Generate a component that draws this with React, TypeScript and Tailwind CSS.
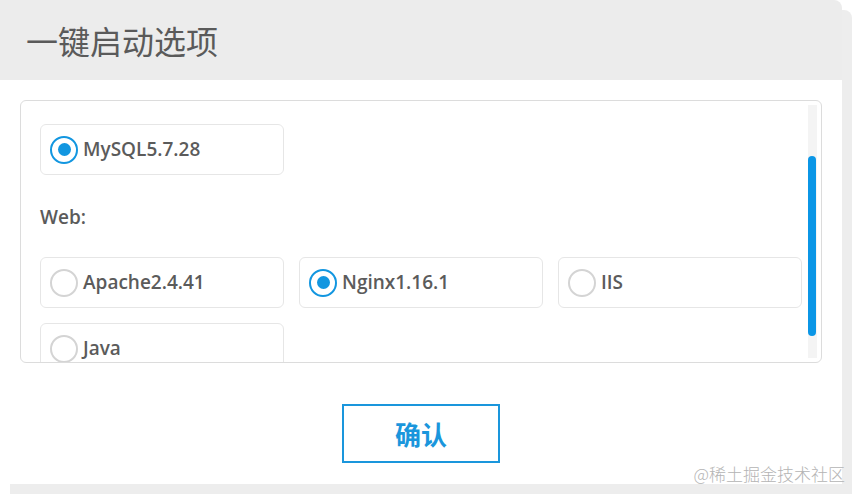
import React from "react";

type Option = { name: string; checked?: boolean };

const Radio: React.FC<{ checked?: boolean }> = ({ checked }) =>
  checked ? (
    <span className="flex h-[28px] w-[28px] shrink-0 items-center justify-center rounded-full border-[2.5px] border-[#1296e0] bg-white">
      <span className="h-[13px] w-[13px] rounded-full bg-[#1296e0]" />
    </span>
  ) : (
    <span className="h-[28px] w-[28px] shrink-0 rounded-full border-2 border-[#d4d4d4] bg-white" />
  );

const OptionCard: React.FC<{ opt: Option }> = ({ opt }) => (
  <div className="flex h-[51px] items-center gap-[5px] rounded-[6px] border border-[#e6e6e6] bg-white pl-[9px]">
    <Radio checked={opt.checked} />
    <span className="text-[19px] font-semibold text-[#5b5b5b]">{opt.name}</span>
  </div>
);

const App: React.FC = () => {
  const web: Option[] = [
    { name: "Apache2.4.41" },
    { name: "Nginx1.16.1", checked: true },
    { name: "IIS" },
    { name: "Java" },
  ];

  return (
    <div
      className="relative h-[494px] w-[852px] overflow-hidden bg-white"
      style={{ fontFamily: '"Open Sans", "Noto Sans CJK SC", sans-serif' }}
    >
      {/* Dialog */}
      <div className="flex h-[484px] w-[842px] flex-col rounded-tr-[8px] bg-white shadow-[10px_10px_0_0_#ededed]">
        {/* Header */}
        <div className="flex h-[80px] items-center rounded-tr-[8px] bg-[#ececec] pl-[26px]">
          <h2
            className="text-[32px] font-normal text-[#5a5a5a]"
            style={{ fontFamily: '"Noto Sans CJK SC", sans-serif' }}
          >
            一键启动选项
          </h2>
        </div>

        {/* Body */}
        <div className="flex flex-col px-[20px] pt-[20px]">
          <div className="relative h-[263px] overflow-hidden rounded-[6px] border border-[#dcdcdc]">
            <div className="pl-[19px] pr-[19px] pt-[23px]">
              <div className="grid grid-cols-3 gap-[15px]">
                <OptionCard opt={{ name: "MySQL5.7.28", checked: true }} />
              </div>
              <div className="mt-[26px] mb-[24px] h-[32px] text-[19px] leading-[32px] font-semibold text-[#5b5b5b]">
                Web:
              </div>
              <div className="grid grid-cols-3 gap-x-[15px] gap-y-[15px]">
                {web.map((o) => (
                  <OptionCard key={o.name} opt={o} />
                ))}
              </div>
            </div>

            {/* Scrollbar */}
            <div className="absolute right-[4px] top-[4px] bottom-[4px] w-[9px] bg-[#f4f4f4]">
              <div className="mt-[51px] h-[180px] w-[8px] rounded-full bg-[#0b96e6]" />
            </div>
          </div>

          <button
            className="mx-auto mt-[41px] flex h-[59px] w-[158px] items-center justify-center border-2 border-[#1a96dc] bg-white text-[26px] font-bold text-[#1a96dc]"
            style={{ fontFamily: '"Noto Sans CJK SC", sans-serif' }}
          >
            确认
          </button>
        </div>
      </div>

      {/* Watermark */}
      <span
        className="absolute right-[7px] bottom-[8px] text-[17px] font-light text-[#b4b4b4]"
        style={{ fontFamily: '"Noto Sans CJK SC", sans-serif' }}
      >
        @稀土掘金技术社区
      </span>
    </div>
  );
};

export default App;
